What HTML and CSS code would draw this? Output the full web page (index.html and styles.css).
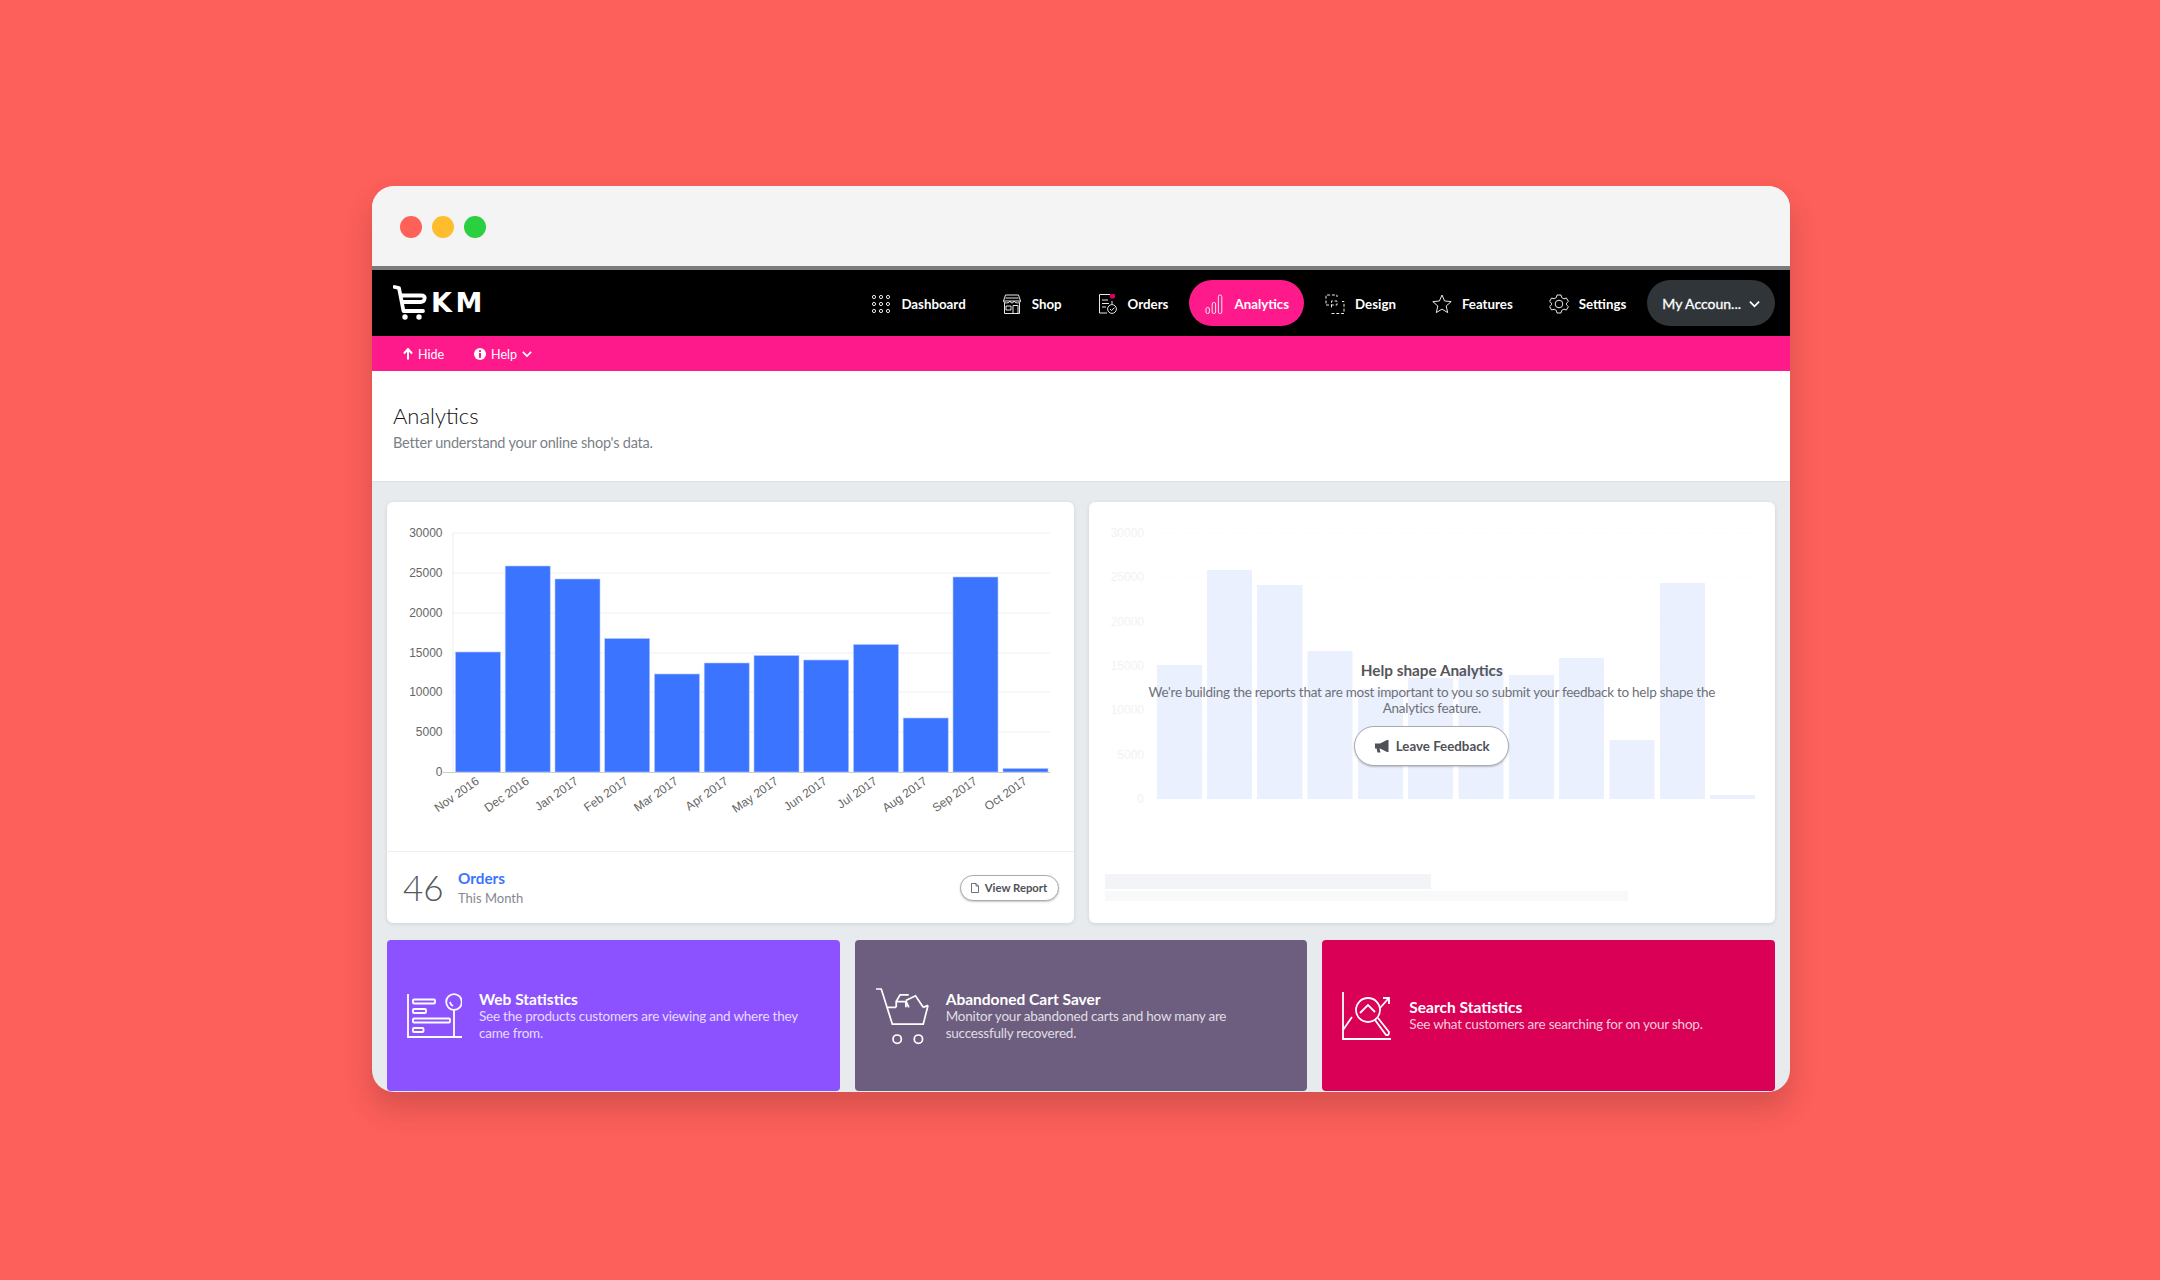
FILE: index.html
```html
<!DOCTYPE html>
<html lang="en">
<head>
    <meta charset="UTF-8">
    <title>EKM Analytics</title>
    <link rel="stylesheet" href="styles.css">
</head>
<body>
    <div class="window">
        <div class="titlebar">
            <span class="dot dot-red"></span>
            <span class="dot dot-yellow"></span>
            <span class="dot dot-green"></span>
        </div>

        <header class="topnav">
            <div class="logo">
                <svg class="logo-cart" viewBox="0 0 34 36" width="34" height="36">
                    <path d="M1.5 2 L6 3 L10.5 26 H30 M8.5 10.5 H28 Q32.5 10.5 31.5 14 Q31 17 27.5 17 H10"/>
                    <circle class="fill" cx="12" cy="32" r="2.7"/>
                    <circle class="fill" cx="26" cy="32" r="2.7"/>
                </svg>
                <span class="logo-text">KM</span>
            </div>
            <nav class="nav-items">
                <a class="nav-item">
                    <svg class="nav-icon" viewBox="0 0 20 20">
                        <circle cx="3" cy="3" r="1.6"/><circle cx="10" cy="3" r="1.6"/><circle cx="17" cy="3" r="1.6"/>
                        <circle cx="3" cy="10" r="1.6"/><circle cx="10" cy="10" r="1.6"/><circle cx="17" cy="10" r="1.6"/>
                        <circle cx="3" cy="17" r="1.6"/><circle cx="10" cy="17" r="1.6"/><circle cx="17" cy="17" r="1.6"/>
                    </svg>
                    Dashboard
                </a>
                <a class="nav-item">
                    <svg class="nav-icon" viewBox="0 0 20 20">
                        <path d="M3.5 1 H16.5 L18.5 7 H1.5 Z M1.5 7 Q1.5 9 4.5 9 Q7.5 9 8 7 Q8.5 9 10 9 Q11.5 9 12 7 Q12.5 9 15.5 9 Q18.5 9 18.5 7 M2.5 9 V19.5 H17.5 V9 M11 19.5 V11.5 H16 V19.5 M4 12 H9 V16 H4 Z M3.5 4 H16.5"/>
                    </svg>
                    Shop
                </a>
                <a class="nav-item">
                    <svg class="nav-icon" viewBox="0 0 20 20">
                        <path d="M12 0.5 H1.5 V19 H9 M4 6 H10 M4 9.5 H11 M4 13 H8 M14 7 V10"/>
                        <circle cx="14" cy="15" r="4.4"/>
                        <path d="M12 15 L13.6 16.6 L16.4 13.6"/>
                        <circle class="badge" cx="14.5" cy="2" r="2.6"/>
                    </svg>
                    Orders
                </a>
                <a class="nav-item nav-item-active">
                    <svg class="nav-icon" viewBox="0 0 20 20">
                        <rect x="2" y="13.5" width="3.4" height="6" rx="1.5"/>
                        <rect x="8.2" y="8.5" width="3.4" height="11" rx="1.5"/>
                        <rect x="14.4" y="1" width="3.4" height="18.5" rx="1.5"/>
                    </svg>
                    Analytics
                </a>
                <a class="nav-item">
                    <svg class="nav-icon" viewBox="0 0 20 20">
                        <path class="dash" d="M1 9.5 V1 H12 V3 M6.5 19.5 H19 V7.5 H17"/>
                        <path class="dash" d="M1 11 H12 V7 H6.5 V15"/>
                    </svg>
                    Design
                </a>
                <a class="nav-item">
                    <svg class="nav-icon" viewBox="0 0 20 20">
                        <path d="M10 1 L12.6 7 L19.2 7.6 L14.2 12 L15.7 18.6 L10 15.1 L4.3 18.6 L5.8 12 L0.8 7.6 L7.4 7 Z" stroke-linejoin="round"/>
                    </svg>
                    Features
                </a>
                <a class="nav-item">
                    <svg class="nav-icon" viewBox="0 0 20 20">
                        <path d="M8 1 H12 L12.7 3.6 L14.9 4.8 L17.4 4 L19.4 7.4 L17.5 9.2 V10.8 L19.4 12.6 L17.4 16 L14.9 15.2 L12.7 16.4 L12 19 H8 L7.3 16.4 L5.1 15.2 L2.6 16 L0.6 12.6 L2.5 10.8 V9.2 L0.6 7.4 L2.6 4 L5.1 4.8 L7.3 3.6 Z" stroke-linejoin="round"/>
                        <circle cx="10" cy="10" r="3.8"/>
                    </svg>
                    Settings
                </a>
                <a class="nav-item nav-account">
                    My Accoun...
                    <svg class="nav-chevron" viewBox="0 0 12 8"><path d="M1 1.5 L6 6.5 L11 1.5"/></svg>
                </a>
            </nav>
        </header>

        <div class="subbar">
            <a class="sub-link">
                <svg class="sub-arrow" viewBox="0 0 10 12"><path d="M5 11.5 V1.5 M1 5.5 L5 1 L9 5.5"/></svg>
                Hide
            </a>
            <a class="sub-link">
                <svg class="sub-info" viewBox="0 0 12 12">
                    <circle cx="6" cy="6" r="6"/>
                    <rect class="cut" x="5" y="2.2" width="2" height="1.8"/>
                    <rect class="cut" x="5" y="5" width="2" height="4.8"/>
                </svg>
                Help
                <svg class="sub-icon" viewBox="0 0 12 8"><path d="M1 1.5 L6 6.5 L11 1.5"/></svg>
            </a>
        </div>

        <div class="page-head">
            <h1>Analytics</h1>
            <p>Better understand your online shop's data.</p>
        </div>

        <main class="content">
            <div class="cards">
                <section class="card">
                    <!-- viewBox uses page coords, easier to read values off the screenshot -->
                    <svg class="chart" viewBox="387 502 687 349" width="687" height="349">
                        <g class="grid">
                            <path d="M453 533 H1050 M453 573 H1050 M453 613 H1050 M453 653 H1050 M453 692 H1050 M453 732 H1050"/>
                            <path d="M453 533 V772"/>
                        </g>
                        <path class="base" d="M443 772.5 H1050"/>
                        <g class="y-labels">
                            <text x="442.5" y="537">30000</text>
                            <text x="442.5" y="577">25000</text>
                            <text x="442.5" y="617">20000</text>
                            <text x="442.5" y="657">15000</text>
                            <text x="442.5" y="696">10000</text>
                            <text x="442.5" y="736">5000</text>
                            <text x="442.5" y="776">0</text>
                        </g>
                        <g class="bars">
                            <rect x="455.5" y="652" width="45" height="120"/>
                            <rect x="505.2" y="566" width="45" height="206"/>
                            <rect x="555" y="579" width="45" height="193"/>
                            <rect x="604.7" y="638.5" width="45" height="133.5"/>
                            <rect x="654.5" y="674" width="45" height="98"/>
                            <rect x="704.2" y="663" width="45" height="109"/>
                            <rect x="754" y="655.5" width="45" height="116.5"/>
                            <rect x="803.7" y="660" width="45" height="112"/>
                            <rect x="853.5" y="644.5" width="45" height="127.5"/>
                            <rect x="903.2" y="718" width="45" height="54"/>
                            <rect x="953" y="577" width="45" height="195"/>
                            <rect x="1003" y="768.5" width="45" height="3.5"/>
                        </g>
                        <g class="x-labels">
                            <text transform="translate(480 783) rotate(-35)">Nov 2016</text>
                            <text transform="translate(530 783) rotate(-35)">Dec 2016</text>
                            <text transform="translate(579 783) rotate(-35)">Jan 2017</text>
                            <text transform="translate(629 783) rotate(-35)">Feb 2017</text>
                            <text transform="translate(679 783) rotate(-35)">Mar 2017</text>
                            <text transform="translate(729 783) rotate(-35)">Apr 2017</text>
                            <text transform="translate(779 783) rotate(-35)">May 2017</text>
                            <text transform="translate(828 783) rotate(-35)">Jun 2017</text>
                            <text transform="translate(878 783) rotate(-35)">Jul 2017</text>
                            <text transform="translate(928 783) rotate(-35)">Aug 2017</text>
                            <text transform="translate(978 783) rotate(-35)">Sep 2017</text>
                            <text transform="translate(1028 783) rotate(-35)">Oct 2017</text>
                        </g>
                    </svg>
                    <div class="card-foot">
                        <span class="stat">46</span>
                        <div class="stat-text">
                            <a class="stat-name">Orders</a>
                            <span class="stat-period">This Month</span>
                        </div>
                        <a class="btn btn-small">
                            <svg class="btn-doc" viewBox="0 0 8 10"><path d="M0.5 0.5 H5 L7.5 3 V9.5 H0.5 Z M5 0.5 V3 H7.5"/></svg>
                            View Report
                        </a>
                    </div>
                </section>

                <section class="card card-ghost">
                    <svg class="chart chart-ghost" viewBox="1089 502 686 349" width="686" height="349">
                        <g class="grid-ghost">
                            <path d="M1154 533 H1755 M1154 577 H1755 M1154 622 H1755 M1154 666 H1755 M1154 710 H1755 M1154 755 H1755 M1089 851 H1775"/>
                        </g>
                        <g class="y-labels-ghost">
                            <text x="1144" y="537">30000</text>
                            <text x="1144" y="581">25000</text>
                            <text x="1144" y="626">20000</text>
                            <text x="1144" y="670">15000</text>
                            <text x="1144" y="714">10000</text>
                            <text x="1144" y="759">5000</text>
                            <text x="1144" y="803">0</text>
                        </g>
                        <g class="bars-ghost">
                            <rect x="1157" y="665" width="45" height="134"/>
                            <rect x="1207" y="570" width="45" height="229"/>
                            <rect x="1257" y="585" width="45.5" height="214"/>
                            <rect x="1307.5" y="651" width="45" height="148"/>
                            <rect x="1358" y="689.5" width="45" height="109.5"/>
                            <rect x="1408" y="678" width="45" height="121"/>
                            <rect x="1458.5" y="669" width="45" height="130"/>
                            <rect x="1509" y="675" width="45" height="124"/>
                            <rect x="1559" y="658" width="45" height="141"/>
                            <rect x="1609.5" y="740" width="45" height="59"/>
                            <rect x="1660" y="583" width="45" height="216"/>
                            <rect x="1710" y="795" width="45" height="4"/>
                        </g>
                    </svg>
                    <div class="card-foot card-foot-ghost">
                        <div class="skeleton skeleton-title"></div>
                        <div class="skeleton skeleton-line"></div>
                    </div>
                    <div class="overlay">
                        <h3>Help shape Analytics</h3>
                        <p>We're building the reports that are most important to you so submit your feedback to help shape the Analytics feature.</p>
                        <a class="btn btn-feedback">
                            <svg class="btn-horn" viewBox="0 0 16 14">
                                <path d="M1 4.5 H6 L13 1 H14.5 V13 H13 L6 9.5 H5.5 L6.5 13.5 H3.5 L2.6 9.5 H1 Z"/>
                            </svg>
                            Leave Feedback
                        </a>
                    </div>
                </section>
            </div>

            <div class="tiles">
                <a class="tile tile-purple">
                    <svg class="tile-icon" viewBox="7 11 55 45" width="55" height="45">
                        <path d="M8 12 V55 H62"/>
                        <rect x="13" y="17.5" width="22" height="4" rx="1"/>
                        <rect x="13" y="27" width="13" height="4" rx="1"/>
                        <rect x="13" y="36.5" width="37" height="4" rx="1"/>
                        <rect x="13" y="46" width="10.5" height="4" rx="1"/>
                        <circle cx="54" cy="20" r="7.8"/>
                        <path d="M54 28 V55 M50 20 Q50.5 23 53 24"/>
                    </svg>
                    <div class="tile-text">
                        <h4>Web Statistics</h4>
                        <p>See the products customers are viewing and where they came from.</p>
                    </div>
                </a>
                <a class="tile tile-slate">
                    <svg class="tile-icon" viewBox="5 3 56 60" width="54" height="58">
                        <path d="M6 5 H11.5 L23 41.5 H55 L60 22 M17 24 H27 M55 24 L60 22"/>
                        <path d="M27 24 V18 H37 V24 M27 18 L31 11 H40 M37 17 L47 12 L55 24 M37 17 L40 24"/>
                        <circle cx="28" cy="57" r="4.3"/>
                        <circle cx="50" cy="57" r="4.3"/>
                    </svg>
                    <div class="tile-text">
                        <h4>Abandoned Cart Saver</h4>
                        <p>Monitor your abandoned carts and how many are successfully recovered.</p>
                    </div>
                </a>
                <a class="tile tile-crimson">
                    <svg class="tile-icon" viewBox="0 0 50 48" width="50" height="48">
                        <path d="M1 0 V47 H49 M1 38 L10 25"/>
                        <circle cx="26" cy="18" r="12"/>
                        <path d="M18 21 L26 13 L33 20 M33 28 L44 43 Q47 44 47 40 L36 26"/>
                        <path d="M38 16 L46 7 M41 6 H47 V12"/>
                    </svg>
                    <div class="tile-text">
                        <h4>Search Statistics</h4>
                        <p>See what customers are searching for on your shop.</p>
                    </div>
                </a>
            </div>
        </main>
    </div>
</body>
</html>
```

FILE: styles.css
```css
* {
    box-sizing: border-box;
}
body {
    margin: 0;
    height: 1280px;
    padding: 186px 0 0 372px;
    background-color: #fd5f5a;
    font-family: Lato, "Liberation Sans", sans-serif;
    overflow: hidden;
}
svg {
    display: block;
    flex: none;
}
.window {
    width: 1418px;
    height: 906px;
    border-radius: 22px;
    overflow: hidden;
    background-color: #e7ebed;
    box-shadow: 0 16px 30px rgba(0, 0, 0, 0.16);
}

/* browser chrome */
.titlebar {
    display: flex;
    align-items: center;
    gap: 10px;
    height: 84px;
    padding: 1px 0 0 28px;
    background-color: #f4f4f4;
    border-bottom: 4px solid #7a7b7a;
}
.dot {
    width: 22px;
    height: 22px;
    border-radius: 50%;
}
.dot-red { background-color: #ff6159; }
.dot-yellow { background-color: #ffbd2e; }
.dot-green { background-color: #2ad03f; }

/* black nav */
.topnav {
    display: flex;
    align-items: center;
    justify-content: space-between;
    height: 66px;
    padding: 0 15px 0 21px;
    background-color: #000;
}
.logo {
    display: flex;
    align-items: center;
    gap: 4px;
}
.logo-cart path {
    fill: none;
    stroke: #fff;
    stroke-width: 3.8;
    stroke-linecap: round;
    stroke-linejoin: round;
}
.logo-cart .fill {
    fill: #fff;
}
.logo-text {
    color: #fff;
    font-family: "DejaVu Sans", sans-serif;
    font-weight: 700;
    font-size: 27px;
    line-height: 1;
    letter-spacing: 3.5px;
    margin-top: -1px;
}
.nav-items {
    display: flex;
    align-items: center;
    gap: 6px;
}
.nav-item {
    display: flex;
    align-items: center;
    gap: 10px;
    height: 46px;
    padding: 1px 15px 0;
    border-radius: 23px;
    color: #fff;
    font-size: 13.3px;
    font-weight: 700;
    white-space: nowrap;
}
.nav-item-active {
    background-color: #ff1a8c;
}
.nav-account {
    background-color: #2f3538;
    gap: 8px;
    font-size: 14px;
    font-weight: 400;
    -webkit-text-stroke: 0.3px #fff;
}
.nav-icon {
    width: 20px;
    height: 20px;
    fill: none;
    stroke: #e8e8e8;
    stroke-width: 1;
}
.nav-icon .badge {
    fill: #e0005a;
    stroke: none;
}
.nav-icon .dash {
    stroke-dasharray: 3 1.8;
}
.nav-chevron {
    width: 11px;
    height: 8px;
    fill: none;
    stroke: #fff;
    stroke-width: 2;
}

/* pink bar */
.subbar {
    display: flex;
    align-items: center;
    gap: 30px;
    height: 35px;
    padding: 1px 0 0 31px;
    background-color: #ff1a8c;
}
.sub-link {
    display: flex;
    align-items: center;
    gap: 5px;
    color: #fff;
    font-size: 12.5px;
}
.sub-arrow {
    width: 10px;
    height: 12px;
    fill: none;
    stroke: #fff;
    stroke-width: 2;
}
.sub-icon {
    width: 10px;
    height: 10px;
    fill: none;
    stroke: #fff;
    stroke-width: 2;
}
.sub-info {
    width: 12px;
    height: 12px;
    fill: #fff;
}
.sub-info .cut {
    fill: #ff1a8c;
}

.page-head {
    height: 111px;
    padding: 29px 21px 0;
    background-color: #fff;
    border-bottom: 1px solid #dfe2e4;
}
.page-head h1 {
    margin: 0;
    color: #111;
    font-size: 22px;
    font-weight: 300;
    line-height: 32px;
}
.page-head p {
    margin: 0;
    color: #7b7f87;
    font-size: 14.5px;
    letter-spacing: -0.2px;
    line-height: 22px;
}

.content {
    padding: 20px 15px 0;
}
.cards {
    display: grid;
    grid-template-columns: 1fr 1fr;
    gap: 15px;
}
.card {
    position: relative;
    height: 421px;
    border-radius: 6px;
    overflow: hidden;
    background-color: #fff;
    box-shadow: 0 1px 4px rgba(0, 0, 0, 0.1);
}
.chart text {
    font-family: "Liberation Sans", sans-serif;
    font-size: 12px;
}
.grid path {
    fill: none;
    stroke: #eef0f1;
    stroke-width: 1.2;
}
.base {
    fill: none;
    stroke: #c9ccce;
    stroke-width: 1;
}
.y-labels text {
    fill: #666;
    text-anchor: end;
}
.x-labels text {
    fill: #666;
    text-anchor: end;
}
.bars rect {
    fill: #3b74ff;
    stroke: #b4c8ff;
    stroke-width: 0.6;
}
.card-foot {
    display: flex;
    align-items: center;
    height: 72px;
    padding: 0 15px 0 16px;
    border-top: 1px solid #edeef0;
}
.stat {
    width: 55px;
    color: #54575c;
    font-size: 35px;
    font-weight: 300;
    line-height: 1;
}
.stat-text {
    display: flex;
    flex-direction: column;
    gap: 2px;
    flex: 1;
}
.stat-name {
    color: #3b74ff;
    font-size: 15.3px;
    font-weight: 700;
    line-height: 18px;
}
.stat-period {
    color: #85888e;
    font-size: 13px;
    line-height: 18px;
}
.btn {
    display: flex;
    align-items: center;
    justify-content: center;
    background-color: #fff;
    border: 1px solid #a9abb0;
    color: #4f5158;
    font-weight: 700;
    box-shadow: 0 1px 2px rgba(0, 0, 0, 0.22);
}
.btn-small {
    gap: 6px;
    width: 99px;
    height: 26px;
    border-radius: 13px;
    font-size: 11.3px;
}
.btn-doc {
    width: 8px;
    height: 10px;
    fill: none;
    stroke: #4f5158;
    stroke-width: 0.8;
}

/* greyed out card */
.y-labels-ghost text {
    fill: #f2f2f2;
    text-anchor: end;
}
.grid-ghost path {
    fill: none;
    stroke: #f8f8f8;
    stroke-dasharray: 1 2;
}
.bars-ghost rect {
    fill: #eaf0fe;
}
.card-foot-ghost {
    display: block;
    padding: 23px 0 0 16px;
    border-top: 0;
}
.skeleton-title {
    width: 326px;
    height: 15px;
    background-color: #f2f4f8;
}
.skeleton-line {
    width: 523px;
    height: 10px;
    margin-top: 2px;
    background-color: #f8f9fb;
}
.overlay {
    position: absolute;
    left: 0;
    right: 0;
    top: 158px;
    display: flex;
    flex-direction: column;
    align-items: center;
    text-align: center;
}
.overlay h3 {
    margin: 0;
    color: #55565c;
    font-size: 15.3px;
    font-weight: 700;
    line-height: 20px;
}
.overlay p {
    width: 600px;
    margin: 4px 0 0;
    color: #6f7076;
    font-size: 13.5px;
    letter-spacing: -0.26px;
    line-height: 16px;
}
.btn-feedback {
    gap: 6px;
    width: 155px;
    height: 40px;
    margin-top: 10px;
    border-radius: 20px;
    font-size: 13.3px;
}
.btn-horn {
    width: 16px;
    height: 14px;
    fill: #4f5158;
}

.tiles {
    display: grid;
    grid-template-columns: repeat(3, 1fr);
    gap: 15px;
    margin-top: 17px;
}
.tile {
    display: flex;
    align-items: center;
    gap: 17px;
    height: 151px;
    padding: 0 20px;
    border-radius: 4px;
    color: #fff;
}
.tile-purple { background-color: #8c52ff; }
.tile-slate { background-color: #6d5e80; }
.tile-crimson { background-color: #d90055; }
.tile-icon {
    fill: none;
    stroke: #fff;
    stroke-width: 1.8;
}
.tile-text h4 {
    margin: 0;
    font-size: 15.5px;
    font-weight: 700;
    line-height: 18px;
}
.tile-text p {
    margin: 0;
    color: rgba(255, 255, 255, 0.8);
    font-size: 13.5px;
    letter-spacing: -0.22px;
    line-height: 16.5px;
}
```
